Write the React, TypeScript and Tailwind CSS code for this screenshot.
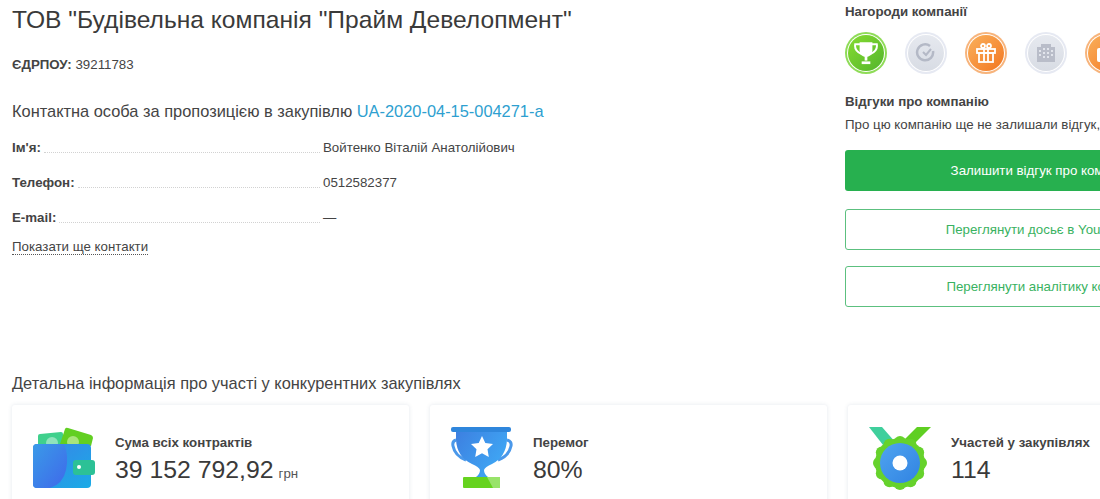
const ContactRow = ({ label, value }: { label: string; value: string }) => (
  <div className="flex items-end h-[16px]">
    <span className="font-bold text-[13.3px] leading-[16px] text-[#444]">{label}</span>
    <span className="flex-1 mx-[3px] mb-[3px] border-b border-dotted border-[#d2d2d2]"></span>
    <span className="w-[193px] shrink-0 text-[13.3px] leading-[16px] text-[#444] whitespace-nowrap">{value}</span>
  </div>
);

const Award = ({ tone, children }: { tone: "green" | "gray" | "orange"; children: React.ReactNode }) => {
  const ring = tone === "green" ? "bg-[#8fdc58]" : tone === "orange" ? "bg-[#f7b47c]" : "bg-[#e6e9f2]";
  const inner =
    tone === "green"
      ? "bg-gradient-to-br from-[#86dc30] to-[#52b52c]"
      : tone === "orange"
        ? "bg-gradient-to-br from-[#f9b05a] to-[#f2761c]"
        : "bg-gradient-to-b from-[#e6e9ef] to-[#d8dce4]";
  return (
    <div className={`w-[42px] h-[42px] shrink-0 rounded-full p-[2px] ${ring}`}>
      <div className="w-full h-full rounded-full bg-white p-[1px]">
        <div className={`w-full h-full rounded-full flex items-center justify-center ${inner}`}>{children}</div>
      </div>
    </div>
  );
};

const WalletIcon = () => (
  <svg width="62" height="62" viewBox="0 0 62 62">
    <defs>
      <linearGradient id="wb" x1="0" y1="0" x2="1" y2="1">
        <stop offset="0" stopColor="#3b82e8" />
        <stop offset="1" stopColor="#1aabe6" />
      </linearGradient>
      <linearGradient id="wc" x1="0" y1="0" x2="1" y2="1">
        <stop offset="0" stopColor="#3a9ae8" />
        <stop offset="1" stopColor="#3f68ea" />
      </linearGradient>
    </defs>
    <path d="M5 9 q0 -2 2 -2 l21 -2 q2 0 2 2 v12 h-25z" fill="#3fd08c" />
    <path d="M27 17 l5 -15 q1 -2 3 -1 l23 7 q2 1 2 3 l-2 8z" fill="#62cf22" />
    <circle cx="40" cy="15" r="6" fill="#a8e57c" />
    <circle cx="19" cy="16" r="6" fill="#8fe3bc" />
    <rect x="0" y="17" width="58" height="44" rx="4" fill="url(#wb)" />
    <path d="M0 21 q0 -4 4 -4 h27 q5 11 2 26 q-3 14 -16 18 h-13 q-4 0 -4 -4z" fill="url(#wc)" />
    <rect x="40" y="33" width="22" height="15" rx="3" fill="#2cc196" />
    <circle cx="46" cy="40" r="2" fill="#fff" />
  </svg>
);

const CupIcon = () => (
  <svg width="62" height="62" viewBox="0 0 62 62">
    <defs>
      <linearGradient id="cb" x1="0" y1="0" x2="1" y2="0.6">
        <stop offset="0" stopColor="#3d7fe0" />
        <stop offset="1" stopColor="#3fa8f5" />
      </linearGradient>
    </defs>
    <path d="M5 13 q-4 1 -3 6 q2 10 13 14 M56 13 q5 1 4 6 q-2 10 -13 14" fill="none" stroke="#4a98ea" strokeWidth="3" />
    <path d="M5 4 h51 v9 q-1 17 -15 24 q-7 3 -8 6 q0 4 4 7 h-12 q4 -3 4 -7 q-1 -3 -8 -6 q-15 -7 -16 -24z" fill="url(#cb)" />
    <rect x="0" y="0" width="60" height="5" rx="2" fill="#2f86dc" />
    <path d="M31 9 l3.300 7 l7.700 1 l-5.500 5.200 l1.300 7.800 l-6.800 -3.700 l-6.800 3.700 l1.300 -7.800 l-5.500 -5.200 l7.700 -1z" fill="#fff" />
    <rect x="12" y="50" width="37" height="11" rx="1" fill="#66d31f" />
    <path d="M36 50 h13 v11 h-7z" fill="#98e36a" />
  </svg>
);

const MedalIcon = () => {
  const lobes = Array.from({ length: 12 }, (_, i) => (i * Math.PI) / 6);
  return (
    <svg width="62" height="64" viewBox="0 0 62 64">
      <defs>
        <linearGradient id="mb" x1="0" y1="0" x2="1" y2="1">
          <stop offset="0" stopColor="#4fa4f0" />
          <stop offset="1" stopColor="#3183e2" />
        </linearGradient>
      </defs>
      <path d="M0 0 h13 l14 16 l-13 2z" fill="#3fcf9c" />
      <path d="M62 0 h-14 l-18 18 l14 0z" fill="#5fcf22" />
      <circle cx="31" cy="36" r="25" fill="#66d22c" />
      {lobes.map((a) => (
        <circle key={a} cx={31 + 21 * Math.cos(a)} cy={36 + 21 * Math.sin(a)} r="6" fill="#66d22c" />
      ))}
      <circle cx="31" cy="36" r="20" fill="url(#mb)" />
      <circle cx="31" cy="36" r="7.500" fill="#fff" />
    </svg>
  );
};

const StatCard = ({ icon, title, value, unit }: { icon: React.ReactNode; title: string; value: string; unit?: string }) => (
  <div className="w-[397px] h-[120px] shrink-0 bg-white rounded-[3px] shadow-[0_0_4px_rgba(90,110,140,0.16)] flex items-start pt-[22px] pl-[21px]">
    <div className="w-[62px] h-[62px] shrink-0">{icon}</div>
    <div className="ml-[20px] pt-[8px]">
      <div className="text-[13.3px] leading-[16px] font-bold text-[#444] whitespace-nowrap">{title}</div>
      <div className="mt-[4px] text-[24.8px] leading-[30px] text-[#3a3a3a] whitespace-nowrap">
        {value}
        {unit && <span className="ml-[5px] text-[13.3px] text-[#555]">{unit}</span>}
      </div>
    </div>
  </div>
);

export default function App() {
  return (
    <div className="w-[1100px] h-[499px] overflow-hidden bg-white font-['Liberation_Sans',sans-serif]">
      <div className="w-[1300px] flex flex-col">
        <div className="flex h-[373px]">
          <div className="w-[833px] shrink-0 pl-[12px]">
            <h1 className="pt-[3px] text-[24.6px] leading-[34px] text-[#3a3a3a] whitespace-nowrap">
              ТОВ "Будівельна компанія "Прайм Девелопмент"
            </h1>
            <div className="mt-[20px] text-[13.3px] leading-[16px] text-[#444]">
              <b className="font-bold">ЄДРПОУ:</b> 39211783
            </div>
            <div className="mt-[26px] text-[16.4px] leading-[24px] text-[#444]">
              Контактна особа за пропозицією в закупівлю <span className="text-[#2e9fd0]">UA-2020-04-15-004271-a</span>
            </div>
            <div className="mt-[17px] w-[504px] flex flex-col gap-[19px]">
              <ContactRow label="Ім'я:" value="Войтенко Віталій Анатолійович" />
              <ContactRow label="Телефон:" value="0512582377" />
              <ContactRow label="E-mail:" value="—" />
            </div>
            <div className="mt-[8px]">
              <span className="text-[13.3px] leading-[15px] inline-block text-[#444] border-b border-dotted border-[#555]">
                Показати ще контакти
              </span>
            </div>
          </div>
          <div className="w-[411px] shrink-0 pl-[12px]">
            <div className="pt-[4px] text-[13.3px] leading-[16px] font-bold text-[#444]">Нагороди компанії</div>
            <div className="mt-[12px] flex gap-[18px]">
              <Award tone="green">
                <svg width="26" height="26" viewBox="0 0 24 24" fill="none" stroke="#fff" strokeWidth="1.800">
                  <path d="M7 3 h10 v7 q0 4 -5 5 q-5 -1 -5 -5z" fill="#fff" />
                  <path d="M7 4 h-5 q-1 6 6 9 M17 4 h5 q1 6 -6 9" />
                  <path d="M12 15 v4" strokeWidth="2.500" />
                  <path d="M8 21 h8" strokeWidth="2.500" />
                </svg>
              </Award>
              <Award tone="gray">
                <svg width="22" height="22" viewBox="0 0 22 22" fill="none" stroke="#b4b9c6" strokeWidth="2.500">
                  <path d="M15 4 a8 8 0 1 0 3 5" />
                  <path d="M8 10 l3 3 l5 -6" strokeWidth="2" />
                </svg>
              </Award>
              <Award tone="orange">
                <svg width="24" height="24" viewBox="0 0 24 24" fill="none" stroke="#fff" strokeWidth="1.800">
                  <rect x="3" y="8" width="18" height="4" />
                  <rect x="5" y="12" width="14" height="9" />
                  <path d="M10 8 v13 M14 8 v13" />
                  <circle cx="9" cy="5" r="2" />
                  <circle cx="15" cy="5" r="2" />
                </svg>
              </Award>
              <Award tone="gray">
                <svg width="24" height="24" viewBox="0 0 24 24" fill="#b9bdc9">
                  <path d="M7 3 h10 v3 h4 v15 h-18 v-15 h4z" />
                  <path d="M9 7 h2 v2 h-2z M13 7 h2 v2 h-2z M9 11 h2 v2 h-2z M13 11 h2 v2 h-2z M9 15 h2 v2 h-2z M13 15 h2 v2 h-2z M5 9 h2 v2 h-2z M17 9 h2 v2 h-2z M5 13 h2 v2 h-2z M17 13 h2 v2 h-2z" fill="#e2e5ec" />
                </svg>
              </Award>
              <Award tone="orange">
                <svg width="24" height="24" viewBox="0 0 24 24" fill="#fff">
                  <rect x="3" y="7" width="18" height="14" rx="2" />
                  <circle cx="12" cy="14" r="3.500" fill="#f58a30" />
                  <rect x="8" y="3" width="8" height="3" />
                </svg>
              </Award>
            </div>
            <div className="mt-[20px] text-[13.3px] leading-[16px] font-bold text-[#444]">Відгуки про компанію</div>
            <div className="mt-[7px] text-[13.3px] leading-[16px] text-[#444] whitespace-nowrap">
              Про цю компанію ще не залишали відгук, будьте першим
            </div>
            <div className="mt-[17px] h-[41px] rounded-[3px] bg-[#27b04f] text-white text-[13.3px] flex items-center justify-center">
              Залишити відгук про компанію
            </div>
            <div className="mt-[18px] h-[41px] rounded-[3px] border border-[#5cc07f] text-[#39b261] text-[13.3px] flex items-center justify-center">
              Переглянути досьє в YouControl
            </div>
            <div className="mt-[16px] h-[41px] rounded-[3px] border border-[#5cc07f] text-[#39b261] text-[13.3px] flex items-center justify-center">
              Переглянути аналітику компанії
            </div>
          </div>
        </div>
        <div className="pl-[12px]">
          <div className="text-[16.4px] leading-[20px] text-[#444]">Детальна інформація про участі у конкурентних закупівлях</div>
          <div className="mt-[12px] flex gap-[21px]">
            <StatCard icon={<WalletIcon />} title="Сума всіх контрактів" value="39 152 792,92" unit="грн" />
            <StatCard icon={<CupIcon />} title="Перемог" value="80%" />
            <StatCard icon={<MedalIcon />} title="Участей у закупівлях" value="114" />
          </div>
        </div>
      </div>
    </div>
  );
}
